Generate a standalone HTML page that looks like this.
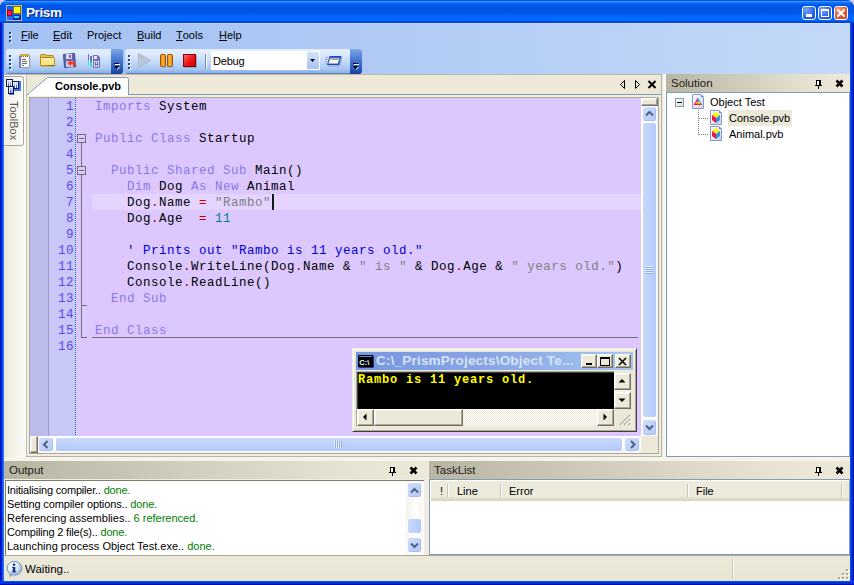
<!DOCTYPE html>
<html><head><meta charset="utf-8">
<style>
*{margin:0;padding:0;box-sizing:border-box}
html,body{width:854px;height:585px;overflow:hidden;background:#d8c8f8}
body{position:relative;font-family:"Liberation Sans",sans-serif;font-size:11px;color:#000}
.a{position:absolute}
svg{position:absolute;overflow:visible}
#win{left:0;top:0;width:854px;height:585px;background:linear-gradient(90deg,#0014c8 0,#0018d0 2px,#0a5af0 2px,#0a5af0 3px,#2a70f5 3px,#2a70f5 4px,transparent 4px,transparent 850px,#0a50f0 850px,#0a50f0 851px,#0030d8 851px,#0030d8 853px,#0010a0 853px),linear-gradient(#0831d9,#0831d9);border-radius:8px 8px 0 0}
#bframe{left:0;top:581px;width:854px;height:4px;background:linear-gradient(#0a50f0 0,#0a50f0 1px,#0030d8 1px,#0030d8 3px,#0010a0 3px)}
#title{left:0;top:0;width:854px;height:23px;border-radius:8px 8px 0 0;background:linear-gradient(#0a4ee0 0,#0a4ee0 1px,#3d95ff 1px,#3d95ff 2px,#0a78ff 2px,#0a78ff 3px,#0062f4 4px,#0056e6 5px,#0054e3 8px,#0056e6 13px,#005ef0 14.5px,#0066ff 16px,#0066ff 20.5px,#0058ee 21px,#0048d0 22px,#0040c8 23px)}
#ttext{left:26px;top:5px;color:#fff;font-weight:bold;font-size:13.5px;letter-spacing:-0.4px;text-shadow:1px 1px 0 #0a1a70}
.tb{top:6px;width:14px;height:14px;border:1px solid #fff;border-radius:3px;background:radial-gradient(circle at 30% 25%,#7aa6ff,#2a63e8 60%,#1a4cd0)}
#client{left:4px;top:23px;width:846px;height:558px;background:#ece9d8}
#menubar{left:4px;top:23px;width:846px;height:51px;background:linear-gradient(90deg,#a3c1f3,#afc9f4 40%,#bad2f7 72%,#c4d9f8)}
#mbtop{left:4px;top:23px;width:846px;height:1px;background:linear-gradient(90deg,#b8d0f8,#cfe0fb)}
.menu{top:29px;font-size:11px;color:#000}
.menu u{text-decoration:none;border-bottom:1px solid #000;line-height:10px;display:inline-block}
.toolbar{top:49px;height:25px;border-radius:3px 0 0 3px;background:linear-gradient(#e4effe 0,#dceafd 20%,#c6dbfa 50%,#a8c7f3 80%,#8cb0e6 95%,#3f67a8 100%)}
.chev{top:49px;height:25px;width:12px;border-radius:0 3px 3px 0;background:linear-gradient(#7fa6e4,#4a7cd6 40%,#2a58bc 80%,#1a3e98)}
.dot{position:absolute;width:2px;height:2px;background:#27418f;box-shadow:1px 1px 0 #fff}
.code{font-family:"Liberation Mono",monospace;font-size:12.5px;letter-spacing:0.5px;line-height:16px;white-space:pre;color:#000}
.kw{color:#8878e4}
.str{color:#808080}
.op{color:#c00000}
.num{color:#008080}
.dot2{color:#a00000}
.cm{color:#0000d0}
.ln{color:#6040f0;text-align:right;width:40px}
.phdr{height:18px;background:linear-gradient(90deg,#b9b5a3 0,#cdc9b8 35%,#e6e3d3 80%,#ece9d8)}
.phdr span{position:absolute;left:5px;top:3px;color:#202020;font-size:11.5px}
.sbtn{position:absolute;border:1px solid #fff;border-radius:3px;background:linear-gradient(135deg,#cfdcfd 0,#c2d3fc 50%,#b4c8f7 100%);box-shadow:inset -1px -1px 0 #a9bdf0}
.thumbv{position:absolute;border:1px solid #fff;border-radius:3px;background:linear-gradient(90deg,#c9d8fc,#bcd0fb 60%,#b2c8f8)}
.thumbh{position:absolute;border:1px solid #fff;border-radius:3px;background:linear-gradient(#c9d8fc,#bcd0fb 60%,#b2c8f8)}
.cbtn{position:absolute;background:#ece9d8;border:1px solid;border-color:#fff #716f64 #716f64 #fff;box-shadow:inset -1px -1px 0 #aca899,inset 1px 1px 0 #f4f3ee}
</style></head><body>
<div id="win" class="a"></div><div id="bframe" class="a"></div>
<div id="title" class="a"></div>
<!-- app icon -->
<svg style="left:6px;top:5px" width="16" height="16">
 <rect x="0" y="0" width="16" height="16" fill="#c6b88c"/>
 <rect x="1" y="1" width="14" height="14" fill="#1a5ae8"/>
 <rect x="1" y="1" width="5" height="3" fill="#1060f0"/>
 <rect x="7" y="1" width="8" height="8" fill="#807020"/>
 <rect x="8" y="2" width="6" height="6" fill="#ffff00"/>
 <rect x="1" y="5" width="5" height="6" fill="#a00000"/>
 <rect x="2" y="6" width="3" height="4" fill="#ff1080"/>
 <rect x="7" y="10" width="8" height="5" fill="#2020c0"/>
 <rect x="8" y="11" width="5" height="2" fill="#20e0e0"/>
 <rect x="1" y="12" width="2" height="3" fill="#2a70f8"/>
 <rect x="4" y="12" width="2" height="3" fill="#2a70f8"/>
</svg>
<div id="ttext" class="a">Prism</div>
<div class="a tb" style="left:802px"></div>
<div class="a" style="left:806px;top:14px;width:6px;height:3px;background:#fff"></div>
<div class="a tb" style="left:818px"></div>
<div class="a" style="left:821px;top:9px;width:8px;height:8px;border:1px solid #fff;border-top-width:2px"></div>
<div class="a tb" style="left:834px;background:radial-gradient(circle at 30% 25%,#f89c7c,#e0502a 60%,#c83c18)"></div>
<svg style="left:834px;top:6px" width="14" height="14"><path d="M4 4 L10 10 M10 4 L4 10" stroke="#fff" stroke-width="2" stroke-linecap="square"/></svg>

<div id="client" class="a"></div>
<div id="menubar" class="a"></div><div id="mbtop" class="a"></div>
<div class="dot" style="left:9px;top:32px"></div>
<div class="dot" style="left:9px;top:36px"></div>
<div class="dot" style="left:9px;top:40px"></div>
<div class="a menu" style="left:21px"><u>F</u>ile</div>
<div class="a menu" style="left:53px"><u>E</u>dit</div>
<div class="a menu" style="left:87px">Project</div>
<div class="a menu" style="left:137px"><u>B</u>uild</div>
<div class="a menu" style="left:176px"><u>T</u>ools</div>
<div class="a menu" style="left:219px"><u>H</u>elp</div>

<!-- toolbar 1 -->
<div class="a toolbar" style="left:6px;width:106px"></div>
<div class="a chev" style="left:111px"></div>
<div class="dot" style="left:9px;top:55px"></div>
<div class="dot" style="left:9px;top:59px"></div>
<div class="dot" style="left:9px;top:63px"></div>
<div class="dot" style="left:9px;top:67px"></div>
<svg style="left:114px;top:63px" width="8" height="8"><rect x="1" y="1" width="5" height="1" fill="#fff"/><rect x="0" y="0" width="5" height="1" fill="#000"/><path d="M0 3 L5 3 L2.5 6 Z" fill="#000"/><path d="M5 4 L6 4 L3 7 L3 6 Z" fill="#fff"/></svg>
<!-- notepad -->
<svg style="left:19px;top:53px" width="12" height="16">
 <path d="M1 2.5 H10.5 V14.5 H1.5 Z" fill="#fbfbf6" stroke="#a0a0b0"/>
 <rect x="0" y="3" width="2" height="12" fill="#7878d0"/>
 <rect x="1" y="1" width="9" height="2" fill="#d0a840"/>
 <rect x="2" y="3" width="1" height="1" fill="#806020"/><rect x="4" y="3" width="1" height="1" fill="#806020"/><rect x="6" y="3" width="1" height="1" fill="#806020"/><rect x="8" y="3" width="1" height="1" fill="#806020"/>
 <rect x="3" y="6" width="4" height="1" fill="#686870"/><rect x="3" y="8" width="5" height="1" fill="#686870"/><rect x="3" y="10" width="5" height="1" fill="#686870"/><rect x="3" y="12" width="2" height="1" fill="#686870"/>
 <path d="M11 3 V15 H2" stroke="#8090b8" opacity="0.4" fill="none"/>
</svg>
<!-- folder -->
<svg style="left:40px;top:54px" width="16" height="13">
 <path d="M0.5 11.5 L0.5 1.5 Q0.5 0.5 1.5 0.5 L5.5 0.5 L6.5 1.5 L12.5 1.5 Q13.5 1.5 13.5 2.5 L13.5 3.5" fill="#e8c048" stroke="#b88a10"/>
 <path d="M0.5 11.5 L0.5 4.5 Q0.5 3.5 1.5 3.5 L13.5 3.5 Q14.5 3.5 14.5 4.5 L14.5 10.5 Q14.5 11.5 13.5 11.5 Z" fill="#fce68c" stroke="#b88a10"/>
 <path d="M2 5.5 L13 5.5" stroke="#fff8d0"/>
 <path d="M1 12.5 L14 12.5 L15.5 11" stroke="#c8a038" opacity="0.5"/>
</svg>
<!-- save -->
<svg style="left:63px;top:53px" width="16" height="16">
 <path d="M0.5 1.5 L11.5 0.5 L12.5 13.5 L1.5 14.5 Z" fill="#6464b4" stroke="#4a4a94"/>
 <rect x="3" y="1" width="6" height="5" fill="#dcdce4"/>
 <rect x="6" y="2" width="2" height="3" fill="#7070a8"/>
 <rect x="3" y="8" width="7" height="6" fill="#c8c8d8"/>
 <path d="M4.5 10 L8 6.5 L8 8.5 Q14 8.5 13.5 15 Q12 11 8 11 L8 13.5 Z" fill="#ff3a1a"/>
</svg>
<!-- save all -->
<svg style="left:88px;top:54px" width="13" height="15">
 <rect x="0" y="0" width="1" height="9" fill="#6868c8"/><rect x="0" y="6" width="1" height="5" fill="#30d8e0"/>
 <rect x="1" y="0" width="1" height="11" fill="#e8ecf8"/>
 <rect x="2" y="2" width="2" height="8" fill="#7070c8"/><rect x="2" y="8" width="2" height="5" fill="#30d8e0"/>
 <rect x="4" y="2" width="1" height="11" fill="#e0e4f0"/>
 <path d="M5 1 H9 L12 3 V13 L11 14 H5 Z" fill="#7070c0"/>
 <rect x="6" y="2" width="3" height="3" fill="#e8e8ee"/>
 <rect x="6" y="7" width="5" height="6" fill="#d8d8e4"/>
 <rect x="7" y="8" width="1" height="4" fill="#7070a8"/><rect x="9" y="8" width="1" height="4" fill="#7070a8"/><rect x="7" y="10" width="3" height="1" fill="#7070a8"/>
</svg>

<!-- toolbar 2 -->
<div class="a toolbar" style="left:125px;width:227px"></div>
<div class="a chev" style="left:350px"></div>
<div class="dot" style="left:128px;top:55px"></div>
<div class="dot" style="left:128px;top:59px"></div>
<div class="dot" style="left:128px;top:63px"></div>
<div class="dot" style="left:128px;top:67px"></div>
<svg style="left:353px;top:63px" width="8" height="8"><rect x="1" y="1" width="5" height="1" fill="#fff"/><rect x="0" y="0" width="5" height="1" fill="#000"/><path d="M0 3 L5 3 L2.5 6 Z" fill="#000"/><path d="M5 4 L6 4 L3 7 L3 6 Z" fill="#fff"/></svg>
<svg style="left:138px;top:53px" width="14" height="16"><path d="M0.5 0.5 L12.5 7.5 L0.5 14.5 Z" fill="#bcc6d6" stroke="#aab6ca"/></svg>
<svg style="left:160px;top:54px" width="14" height="14">
 <defs><linearGradient id="pz" x1="0" x2="1"><stop offset="0" stop-color="#e87800"/><stop offset="0.5" stop-color="#ffc040"/><stop offset="1" stop-color="#e07000"/></linearGradient>
 <linearGradient id="st" x1="0" y1="0" x2="1" y2="1"><stop offset="0" stop-color="#ff7070"/><stop offset="0.5" stop-color="#f01818"/><stop offset="1" stop-color="#c80000"/></linearGradient></defs>
 <rect x="0.5" y="0.5" width="5" height="12" rx="1" fill="url(#pz)" stroke="#a05000"/>
 <rect x="7.5" y="0.5" width="5" height="12" rx="1" fill="url(#pz)" stroke="#a05000"/>
 <rect x="1" y="12.5" width="13" height="1" fill="#6080c0" opacity="0.3"/>
</svg>
<svg style="left:183px;top:54px" width="14" height="14"><rect x="0.5" y="0.5" width="12" height="12" fill="url(#st)" stroke="#8c0000"/><path d="M1 13.5 H13.5 V1" stroke="#40508c" opacity="0.35" fill="none"/></svg>
<div class="a" style="left:205px;top:54px;width:1px;height:15px;background:#6a8ccb;box-shadow:1px 0 0 #fff"></div>
<!-- combo -->
<div class="a" style="left:211px;top:51px;width:109px;height:19px;background:#fff"></div>
<div class="a" style="left:213px;top:55px;font-size:11px;letter-spacing:-0.2px">Debug</div>
<div class="a" style="left:307px;top:52px;width:12px;height:17px;background:linear-gradient(#d2e2fc,#b4ccf4 70%,#a8c2f0)"></div>
<svg style="left:310px;top:59px" width="6" height="4"><path d="M0 0 L5 0 L2.5 3 Z" fill="#000"/></svg>
<svg style="left:325px;top:55px" width="18" height="12">
 <path d="M4.5 1 L16.5 1 L14 10 L2 10 Z" fill="#1a48c0"/>
 <path d="M5 2.2 L15.2 2.2 L13 9 L3 9 Z" fill="#4a78e0"/>
 <path d="M5.2 3.5 L14.6 3.5 L12.6 8.6 L3.4 8.6 Z" fill="#f6eccc"/>
 <path d="M6.3 5 L13.3 5 L12 7.6 L5 7.6 Z" fill="#fcfcfa"/>
 <path d="M6.3 4.5 L13.3 4.5" stroke="#908868" stroke-width="0.8"/>
 <path d="M3 11 L14.5 11 L17 2" stroke="#203060" stroke-width="0.8" fill="none" opacity="0.4"/>
 <rect x="0" y="2" width="3" height="1" fill="#a0a8b8"/><rect x="0" y="4" width="3" height="1" fill="#a0a8b8"/><rect x="0" y="6" width="2" height="1" fill="#a0a8b8"/><rect x="0" y="8" width="1" height="1" fill="#a0a8b8"/>
</svg>

<!-- left strip -->
<div class="a" style="left:4px;top:75px;width:22px;height:382px;background:linear-gradient(90deg,#ece9d8,#fbfbf9)"></div>
<div class="a" style="left:4px;top:76px;width:20px;height:70px;background:linear-gradient(90deg,#f1efe6,#fcfcfa);border:1px solid #aca899;border-left:none;border-radius:0 3px 3px 0"></div>
<svg style="left:6px;top:79px" width="16" height="17">
 <defs><linearGradient id="tbg" x1="0" y1="0" x2="0" y2="1"><stop offset="0" stop-color="#c8d0ff"/><stop offset="1" stop-color="#2040f0"/></linearGradient></defs>
 <rect x="8" y="2" width="7" height="10" fill="#3a78f0"/>
 <rect x="3" y="7" width="5" height="9" fill="#3a78f0"/>
 <rect x="0.5" y="0.5" width="6" height="7" fill="#f4f6ff" stroke="#101850"/>
 <rect x="2" y="2" width="1" height="5" fill="url(#tbg)"/><rect x="4" y="2" width="1" height="5" fill="url(#tbg)"/>
 <rect x="6.5" y="2.5" width="6" height="7" fill="#f4f6ff" stroke="#101850"/>
 <rect x="8" y="4" width="1" height="5" fill="url(#tbg)"/><rect x="10" y="4" width="1" height="5" fill="url(#tbg)"/>
 <rect x="2.5" y="7.5" width="5" height="7" fill="#f4f6ff" stroke="#101850"/>
 <rect x="4" y="9" width="1" height="5" fill="url(#tbg)"/><rect x="5.5" y="9" width="1" height="5" fill="url(#tbg)"/>
</svg>
<div class="a" style="left:20px;top:101px;transform-origin:0 0;transform:rotate(90deg);color:#605850;font-size:11px">ToolBox</div>

<!-- doc area -->
<div class="a" style="left:26px;top:74px;width:636px;height:383px;background:#ece9d8"></div>
<div class="a" style="left:4px;top:74px;width:658px;height:1px;background:#bcb8a8"></div>
<div class="a" style="left:26px;top:75px;width:1px;height:382px;background:#c4c0b0"></div>
<div class="a" style="left:661px;top:75px;width:1px;height:382px;background:#b8b4a4"></div>
<div class="a" style="left:26px;top:456px;width:636px;height:1px;background:#b8b4a4"></div>
<div class="a" style="left:27px;top:94px;width:634px;height:1px;background:#7f9db9"></div>
<div class="a" style="left:27px;top:95px;width:634px;height:361px;background:#f0eee2"></div>
<!-- tab -->
<svg style="left:27px;top:77px" width="104" height="19"><path d="M0.5 17.5 L20.5 0.5 L99.5 0.5 Q101.5 0.5 101.5 2.5 L101.5 18" fill="#fff" stroke="#7f9db9"/><rect x="2" y="17" width="99" height="2" fill="#fff"/></svg>
<div class="a" style="left:55px;top:80px;font-weight:bold;font-size:11px">Console.pvb</div>
<!-- tab nav -->
<svg style="left:618px;top:79px" width="40" height="12">
 <path d="M6.5 1.5 L2.5 5.5 L6.5 9.5 Z" fill="none" stroke="#000"/>
 <path d="M17.5 1.5 L21.5 5.5 L17.5 9.5 Z" fill="none" stroke="#000"/>
 <path d="M30.5 2 L37.5 9 M37.5 2 L30.5 9" stroke="#000" stroke-width="2"/>
</svg>
<!-- editor frame -->
<div class="a" style="left:29px;top:97px;width:630px;height:357px;background:#ece9d8;border:1px solid #aca899"></div>
<div class="a" style="left:30px;top:98px;width:611px;height:338px;background:#dcc8ff"></div>
<div class="a" style="left:30px;top:98px;width:18px;height:338px;background:#bcbcec"></div>
<div class="a" style="left:48px;top:98px;width:1px;height:338px;background:#9c9cd0"></div>
<div class="a" style="left:49px;top:98px;width:26px;height:338px;background:#c8c8f8"></div>
<div class="a" style="left:75px;top:98px;width:1px;height:338px;background:repeating-linear-gradient(#008080 0,#008080 1px,transparent 1px,transparent 2px)"></div>
<div class="a" style="left:92px;top:194px;width:549px;height:16px;background:#e4d4ff"></div>
<div class="a" style="left:272px;top:194px;width:2px;height:16px;background:#102010"></div>
<!-- folds -->
<div class="a" style="left:77px;top:134px;width:9px;height:9px;border:1px solid #707070"></div>
<div class="a" style="left:79px;top:138px;width:5px;height:1px;background:#707070"></div>
<div class="a" style="left:81px;top:143px;width:1px;height:23px;background:#707070"></div>
<div class="a" style="left:77px;top:166px;width:9px;height:9px;border:1px solid #707070"></div>
<div class="a" style="left:79px;top:170px;width:5px;height:1px;background:#707070"></div>
<div class="a" style="left:81px;top:175px;width:1px;height:163px;background:#707070"></div>
<div class="a" style="left:81px;top:305px;width:6px;height:1px;background:#707070"></div>
<div class="a" style="left:81px;top:337px;width:6px;height:1px;background:#707070"></div>
<div class="a" style="left:92px;top:337px;width:546px;height:1px;background:#707070"></div>

<div class="a code ln" style="left:34px;top:99px">1
2
3
4
5
6
7
8
9
10
11
12
13
14
15
16</div>
<div class="a code" style="left:95px;top:99px"><span class="kw">Imports</span> System

<span class="kw">Public Class</span> Startup

  <span class="kw">Public Shared Sub</span> Main()
    <span class="kw">Dim</span> Dog <span class="kw">As New</span> Animal
    Dog<span class="dot2">.</span>Name <span class="op">=</span> <span class="str">"Rambo"</span>
    Dog<span class="dot2">.</span>Age  <span class="op">=</span> <span class="num">11</span>

    <span class="cm">' Prints out "Rambo is 11 years old."</span>
    Console<span class="dot2">.</span>WriteLine(Dog<span class="dot2">.</span>Name &amp; <span class="str">" is "</span> &amp; Dog<span class="dot2">.</span>Age &amp; <span class="str">" years old."</span>)
    Console<span class="dot2">.</span>ReadLine()
  <span class="kw">End Sub</span>

<span class="kw">End Class</span></div>

<!-- vertical scrollbar -->
<div class="a" style="left:641px;top:98px;width:17px;height:338px;background:linear-gradient(90deg,#fdfdfa,#fefefe 50%,#f4f3ee)"></div>
<div class="cbtn" style="left:641px;top:98px;width:17px;height:8px"></div>
<div class="sbtn" style="left:642px;top:106px;width:15px;height:16px"></div>
<svg style="left:645px;top:110px" width="10" height="7"><path d="M1 5.5 L4.5 2 L8 5.5" fill="none" stroke="#4d6185" stroke-width="2"/></svg>
<div class="thumbv" style="left:642px;top:122px;width:15px;height:296px"></div>
<div class="a" style="left:646px;top:266px;width:7px;height:8px;background:repeating-linear-gradient(#eef3fe 0,#eef3fe 1px,#8caae8 1px,#8caae8 2px)"></div>
<div class="sbtn" style="left:642px;top:419px;width:15px;height:17px"></div>
<svg style="left:645px;top:424px" width="10" height="7"><path d="M1 1.5 L4.5 5 L8 1.5" fill="none" stroke="#4d6185" stroke-width="2"/></svg>
<!-- horizontal scrollbar -->
<div class="a" style="left:30px;top:436px;width:611px;height:17px;background:linear-gradient(#fdfdfa,#fefefe 50%,#f4f3ee)"></div>
<div class="cbtn" style="left:30px;top:436px;width:8px;height:17px"></div>
<div class="sbtn" style="left:38px;top:437px;width:16px;height:15px"></div>
<svg style="left:42px;top:440px" width="8" height="10"><path d="M5.5 1 L2 4.5 L5.5 8" fill="none" stroke="#4d6185" stroke-width="2"/></svg>
<div class="thumbh" style="left:55px;top:437px;width:568px;height:15px"></div>
<div class="a" style="left:334px;top:441px;width:8px;height:7px;background:repeating-linear-gradient(90deg,#eef3fe 0,#eef3fe 1px,#8caae8 1px,#8caae8 2px)"></div>
<div class="sbtn" style="left:624px;top:437px;width:16px;height:15px"></div>
<svg style="left:629px;top:440px" width="8" height="10"><path d="M2 1 L5.5 4.5 L2 8" fill="none" stroke="#4d6185" stroke-width="2"/></svg>
<div class="a" style="left:641px;top:436px;width:17px;height:17px;background:#ece9d8"></div>

<!-- console window -->
<div class="a" style="left:352px;top:348px;width:285px;height:84px;background:#ece9d8;border:1px solid;border-color:#f0ecd8 #404040 #404040 #f0ecd8;box-shadow:inset 1px 1px 0 #fff,inset -1px -1px 0 #aca899"></div>
<div class="a" style="left:356px;top:352px;width:277px;height:18px;background:linear-gradient(90deg,#7896e0,#88a6e6 50%,#a6c8f0)"></div>
<svg style="left:358px;top:355px" width="16" height="13">
 <rect x="0" y="0" width="15" height="12" fill="#000"/><rect x="1" y="1" width="13" height="1" fill="#3c8ef0"/>
 <text x="1.3" y="9.6" font-family="Liberation Sans" font-size="7.5" font-weight="bold" fill="#fff">C:\</text>
 <path d="M1 12.5 H15.5 V1" stroke="#203a80" fill="none"/>
</svg>
<div class="a" style="left:376px;top:353px;color:#d8e4f8;font-weight:bold;font-size:13.5px;letter-spacing:0.2px">C:\_PrismProjects\Object Te...</div>
<div class="cbtn" style="left:581px;top:354px;width:16px;height:14px"></div>
<div class="a" style="left:586px;top:363px;width:6px;height:2px;background:#000"></div>
<div class="cbtn" style="left:597px;top:354px;width:16px;height:14px"></div>
<div class="a" style="left:600px;top:357px;width:10px;height:9px;border:1px solid #000;border-top-width:2px"></div>
<div class="cbtn" style="left:615px;top:354px;width:16px;height:14px"></div>
<svg style="left:618px;top:357px" width="10" height="9"><path d="M1 1 L8 8 M8 1 L1 8" stroke="#000" stroke-width="1.5"/></svg>
<div class="a" style="left:356px;top:371px;width:258px;height:38px;background:#000;border-top:1px solid #aca899;border-left:1px solid #aca899;box-shadow:inset 1px 1px 0 #404040"></div>
<div class="a code" style="left:358px;top:373px;color:#ffff00;font-weight:bold;font-size:12px;letter-spacing:0.8px;line-height:14px">Rambo is 11 years old.</div>
<div class="a" style="left:614px;top:373px;width:17px;height:36px;background:repeating-conic-gradient(#fff 0 25%,#ece9d8 0 50%) 0 0/2px 2px;border-top:1px solid #aca899"></div>
<div class="cbtn" style="left:614px;top:373px;width:17px;height:17px"></div>
<svg style="left:618px;top:378px" width="9" height="6"><path d="M0.5 4.5 L4 1 L7.5 4.5 Z" fill="#000"/></svg>
<div class="cbtn" style="left:614px;top:392px;width:17px;height:17px"></div>
<svg style="left:618px;top:398px" width="9" height="6"><path d="M0.5 0.5 L7.5 0.5 L4 4 Z" fill="#000"/></svg>
<div class="a" style="left:356px;top:409px;width:258px;height:17px;background:repeating-conic-gradient(#fff 0 25%,#ece9d8 0 50%) 0 0/2px 2px;border-left:1px solid #aca899"></div>
<div class="cbtn" style="left:357px;top:409px;width:17px;height:17px"></div>
<svg style="left:362px;top:413px" width="6" height="9"><path d="M4.5 0.5 L4.5 7.5 L1 4 Z" fill="#000"/></svg>
<div class="cbtn" style="left:374px;top:409px;width:89px;height:17px"></div>
<div class="cbtn" style="left:597px;top:409px;width:17px;height:17px"></div>
<svg style="left:603px;top:413px" width="6" height="9"><path d="M0.5 0.5 L0.5 7.5 L4 4 Z" fill="#000"/></svg>
<div class="a" style="left:614px;top:409px;width:17px;height:17px;background:#ece9d8"></div>
<svg style="left:619px;top:414px" width="12" height="12"><path d="M11 1 L1 11 M11 5 L5 11 M11 9 L9 11" stroke="#aca899" stroke-width="1.2"/><path d="M11 2.5 L2.5 11 M11 6.5 L6.5 11" stroke="#fff" stroke-width="1"/></svg>

<!-- solution panel -->
<div class="a" style="left:662px;top:74px;width:4px;height:383px;background:linear-gradient(90deg,#e4e2d6,#f8f8f2 40%,#fbfbf6)"></div>
<div class="a phdr" style="left:666px;top:74px;width:184px"><span>Solution</span></div>
<svg style="left:814px;top:78px" width="34" height="12">
 <path d="M2 2 H7 V7 H2 Z" fill="#fff"/><path d="M2.5 2 V7 M5.5 2 V7 M2 2.5 H7 M1 7.5 H8 M4.5 8 V11" stroke="#000" fill="none"/><rect x="5" y="2" width="2" height="5" fill="#000"/>
 <path d="M22.5 2.5 L28.5 8.5 M28.5 2.5 L22.5 8.5" stroke="#000" stroke-width="2.6"/>
</svg>
<div class="a" style="left:666px;top:92px;width:184px;height:365px;background:#fff;border:1px solid #7f9db9"></div>
<div class="a" style="left:675px;top:98px;width:9px;height:9px;border:1px solid #7f9db9;background:linear-gradient(135deg,#fff,#e0e0d8)"></div>
<div class="a" style="left:677px;top:102px;width:5px;height:1px;background:#000"></div>
<svg style="left:692px;top:94px" width="13" height="16">
 <defs><linearGradient id="pg" x1="0" y1="0" x2="1" y2="1"><stop offset="0" stop-color="#ffffff"/><stop offset="1" stop-color="#c8d4f0"/></linearGradient></defs>
 <path d="M0.5 0.5 L9 0.5 L11.5 3 L11.5 14.5 L0.5 14.5 Z" fill="url(#pg)" stroke="#8898c0"/>
 <path d="M9 0.5 L9 3 L11.5 3 Z" fill="#4a88f0"/>
 <path d="M5.8 3.5 L10 11 L1.5 11 Z" fill="#ff00c0"/>
 <path d="M5.8 3.5 L10 11 L5.8 11 Z" fill="#20e0a0"/>
 <path d="M1.5 11 L10 11 L9 9.5 L2.4 9.5 Z" fill="#ff2020"/>
 <path d="M4 8 L7.6 8 L8.5 9.5 L3.2 9.5 Z" fill="#ffe000"/>
</svg>
<div class="a" style="left:710px;top:96px;font-size:11px">Object Test</div>
<div class="a" style="left:698px;top:110px;width:1px;height:25px;background:repeating-linear-gradient(#808080 0,#808080 1px,transparent 1px,transparent 2px)"></div>
<div class="a" style="left:699px;top:118px;width:10px;height:1px;background:repeating-linear-gradient(90deg,#808080 0,#808080 1px,transparent 1px,transparent 2px)"></div>
<div class="a" style="left:699px;top:134px;width:10px;height:1px;background:repeating-linear-gradient(90deg,#808080 0,#808080 1px,transparent 1px,transparent 2px)"></div>
<svg style="left:710px;top:110px" width="13" height="16">
 <path d="M0.5 0.5 L9 0.5 L11.5 3 L11.5 14.5 L0.5 14.5 Z" fill="url(#pg)" stroke="#8898c0"/>
 <path d="M9 0.5 L9 3 L11.5 3 Z" fill="#4a88f0"/>
 <path d="M6 2 L10 5 L6 8 L2 5 Z" fill="#fff000"/>
 <path d="M2 5 L6 8 L6 13 L2 10 Z" fill="#f01050"/>
 <path d="M6 8 L10 5 L10 10 L6 13 Z" fill="#3a8ae8"/>
</svg>
<svg style="left:710px;top:126px" width="13" height="16">
 <path d="M0.5 0.5 L9 0.5 L11.5 3 L11.5 14.5 L0.5 14.5 Z" fill="url(#pg)" stroke="#8898c0"/>
 <path d="M9 0.5 L9 3 L11.5 3 Z" fill="#4a88f0"/>
 <path d="M6 2 L10 5 L6 8 L2 5 Z" fill="#fff000"/>
 <path d="M2 5 L6 8 L6 13 L2 10 Z" fill="#f01050"/>
 <path d="M6 8 L10 5 L10 10 L6 13 Z" fill="#3a8ae8"/>
</svg>
<div class="a" style="left:728px;top:110px;width:64px;height:16px;background:#ece9d8"></div>
<div class="a" style="left:729px;top:112px;font-size:11px">Console.pvb</div>
<div class="a" style="left:729px;top:128px;font-size:11px">Animal.pvb</div>

<!-- bottom area bg -->
<div class="a" style="left:4px;top:457px;width:846px;height:4px;background:#f4f3ec"></div>
<div class="a" style="left:4px;top:461px;width:846px;height:94px;background:#f0eee4"></div>
<!-- output panel -->
<div class="a phdr" style="left:4px;top:461px;width:424px"><span>Output</span></div>
<svg style="left:388px;top:465px" width="34" height="12">
 <path d="M2 2 H7 V7 H2 Z" fill="#fff"/><path d="M2.5 2 V7 M5.5 2 V7 M2 2.5 H7 M1 7.5 H8 M4.5 8 V11" stroke="#000" fill="none"/><rect x="5" y="2" width="2" height="5" fill="#000"/>
 <path d="M22.5 2.5 L28.5 8.5 M28.5 2.5 L22.5 8.5" stroke="#000" stroke-width="2.6"/>
</svg>
<div class="a" style="left:5px;top:480px;width:419px;height:75px;background:#fff;border-top:1px solid #807c6c;border-left:1px solid #807c6c"></div>
<div class="a" style="left:7px;top:483px;line-height:14px;font-size:11px">
<div style="letter-spacing:-0.2px">Initialising compiler.. <span style="color:#008000">done.</span></div>
<div style="letter-spacing:-0.12px">Setting compiler options.. <span style="color:#008000">done.</span></div>
<div>Referencing assemblies.. <span style="color:#008000">6 referenced.</span></div>
<div style="letter-spacing:-0.17px">Compiling 2 file(s).. <span style="color:#008000">done.</span></div>
<div>Launching process Object Test.exe.. <span style="color:#008000">done.</span></div>
</div>
<div class="a" style="left:406px;top:481px;width:17px;height:73px;background:linear-gradient(90deg,#f3f1ea,#fefefe 60%,#f6f5f0)"></div>
<div class="sbtn" style="left:407px;top:482px;width:15px;height:16px"></div>
<svg style="left:410px;top:487px" width="10" height="7"><path d="M1 5.5 L4.5 2 L8 5.5" fill="none" stroke="#4d6185" stroke-width="2"/></svg>
<div class="thumbv" style="left:407px;top:518px;width:15px;height:16px"></div>
<div class="sbtn" style="left:407px;top:537px;width:15px;height:16px"></div>
<svg style="left:410px;top:542px" width="10" height="7"><path d="M1 1.5 L4.5 5 L8 1.5" fill="none" stroke="#4d6185" stroke-width="2"/></svg>

<!-- tasklist panel -->
<div class="a phdr" style="left:429px;top:461px;width:421px"><span>TaskList</span></div>
<svg style="left:814px;top:465px" width="34" height="12">
 <path d="M2 2 H7 V7 H2 Z" fill="#fff"/><path d="M2.5 2 V7 M5.5 2 V7 M2 2.5 H7 M1 7.5 H8 M4.5 8 V11" stroke="#000" fill="none"/><rect x="5" y="2" width="2" height="5" fill="#000"/>
 <path d="M22.5 2.5 L28.5 8.5 M28.5 2.5 L22.5 8.5" stroke="#000" stroke-width="2.6"/>
</svg>
<div class="a" style="left:429px;top:479px;width:421px;height:76px;background:#fff;border:1px solid #7f9db9"></div>
<div class="a" style="left:431px;top:481px;width:418px;height:20px;background:linear-gradient(#ebeadb 0,#ebeadb 16px,#e2dfcc 17px,#d6d2c0 20px)"></div>
<div class="a" style="left:447px;top:484px;width:1px;height:13px;background:#c9c6b4;box-shadow:1px 0 0 #fff"></div>
<div class="a" style="left:500px;top:484px;width:1px;height:13px;background:#c9c6b4;box-shadow:1px 0 0 #fff"></div>
<div class="a" style="left:687px;top:484px;width:1px;height:13px;background:#c9c6b4;box-shadow:1px 0 0 #fff"></div>
<div class="a" style="left:841px;top:484px;width:1px;height:13px;background:#c9c6b4;box-shadow:1px 0 0 #fff"></div>
<div class="a" style="left:440px;top:485px">!</div>
<div class="a" style="left:457px;top:485px">Line</div>
<div class="a" style="left:509px;top:485px">Error</div>
<div class="a" style="left:696px;top:485px">File</div>

<!-- status bar -->
<div class="a" style="left:4px;top:555px;width:846px;height:1px;background:#aca899"></div>
<div class="a" style="left:4px;top:556px;width:846px;height:25px;background:linear-gradient(#ece9d8,#e8e5d4)"></div>
<div class="a" style="left:732px;top:559px;width:1px;height:20px;background:#c9c6b4;box-shadow:1px 0 0 #fff"></div>
<svg style="left:6px;top:561px" width="17" height="17">
 <defs><radialGradient id="ig" cx="35%" cy="30%" r="70%"><stop offset="0" stop-color="#ffffff"/><stop offset="0.6" stop-color="#d8e6fa"/><stop offset="1" stop-color="#8aaee0"/></radialGradient></defs>
 <path d="M8 0.5 A7.2 6.8 0 1 1 5.5 13.4 L4.5 15.5 L4 12.8 A7.2 6.8 0 0 1 8 0.5 Z" fill="url(#ig)" stroke="#5a7cb8" stroke-width="0.8"/>
 <circle cx="8" cy="3.8" r="1.3" fill="#10308a"/>
 <path d="M6 6 H9.3 V10.5 H10.3 V11.5 H5.8 V10.5 H6.8 V7 H6 Z" fill="#10308a"/>
</svg>
<div class="a" style="left:25px;top:563px;font-size:11.5px">Waiting..</div>
<svg style="left:838px;top:569px" width="12" height="12"><g fill="#aca899"><rect x="8" y="0" width="2" height="2"/><rect x="4" y="4" width="2" height="2"/><rect x="8" y="4" width="2" height="2"/><rect x="0" y="8" width="2" height="2"/><rect x="4" y="8" width="2" height="2"/><rect x="8" y="8" width="2" height="2"/></g><g fill="#fff"><rect x="9" y="2" width="2" height="1"/><rect x="10" y="1" width="1" height="1"/><rect x="5" y="6" width="2" height="1"/><rect x="6" y="5" width="1" height="1"/><rect x="9" y="6" width="2" height="1"/><rect x="10" y="5" width="1" height="1"/><rect x="1" y="10" width="2" height="1"/><rect x="2" y="9" width="1" height="1"/><rect x="5" y="10" width="2" height="1"/><rect x="6" y="9" width="1" height="1"/><rect x="9" y="10" width="2" height="1"/><rect x="10" y="9" width="1" height="1"/></g></svg>
</body></html>
